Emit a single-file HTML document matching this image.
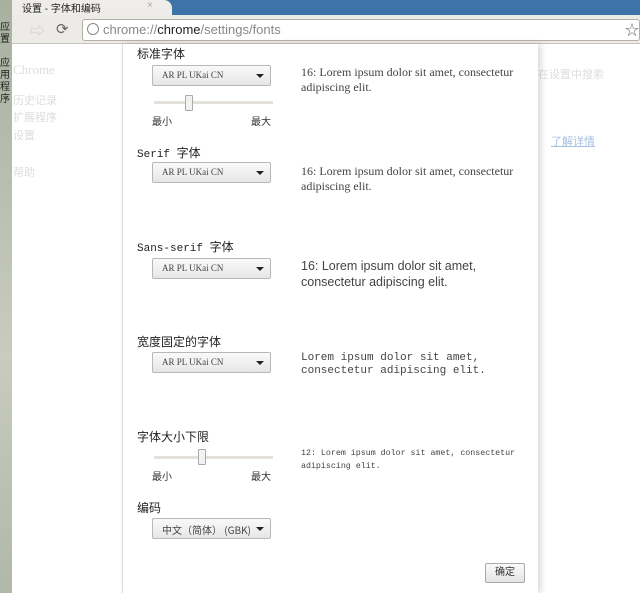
<!DOCTYPE html>
<html><head><meta charset="utf-8"><style>
*{margin:0;padding:0;box-sizing:border-box}
body{width:640px;height:593px;overflow:hidden;position:relative;background:#fff;font-family:"Liberation Sans","Noto Sans CJK SC",sans-serif;color:#222}
.a{position:absolute;white-space:nowrap}
.sel{position:absolute;left:152px;width:119px;height:21px;border:1px solid #b8b8b8;border-radius:2px;background:linear-gradient(#fafafa,#e6e6e6);font-family:"Liberation Serif","Noto Serif CJK SC",serif;font-size:9px;color:#444;padding:4px 0 0 9px}
.sel:after{content:"";position:absolute;right:6px;top:8px;border:4px solid transparent;border-top:4px solid #222;border-bottom:0}
.lbl{position:absolute;left:137px;font-size:12px;color:#222}
.track{position:absolute;left:154px;width:119px;height:3px;background:#e4e0da}
.thumb{position:absolute;width:8px;height:16px;border:1px solid #aaa;background:#f2f2f2;border-radius:1px}
.mm{position:absolute;font-size:10px;color:#333}
.pv{position:absolute;left:301px;font-family:"Liberation Serif",serif;font-size:12px;color:#444;line-height:15px}
.faint{color:#ddd;font-size:11px}
</style></head><body>
<!-- tab bar -->
<div class="a" style="left:0;top:0;width:640px;height:15px;background:#e8e6e2"></div>
<div class="a" style="left:160px;top:0;width:480px;height:15px;background:#3e73a8"></div>
<div class="a" style="left:12px;top:0;width:160px;height:15px;background:#efede9;border-radius:0 8px 0 0"></div>
<div class="a" style="left:22px;top:0;font-size:10px;color:#222">设置 - 字体和编码</div>
<div class="a" style="left:147px;top:0;font-size:10px;color:#aaa">×</div>
<!-- toolbar -->
<div class="a" style="left:0;top:15px;width:640px;height:29px;background:#ecebe8;border-bottom:1px solid #c8c4bc"></div>
<div class="a" style="left:30px;top:20px;font-size:15px;color:#ccc">⇨</div>
<div class="a" style="left:56px;top:20px;font-size:15px;color:#666">⟳</div>
<div class="a" style="left:82px;top:19px;width:558px;height:22px;background:#fff;border:1px solid #b5b0a6;border-radius:3px"></div>
<div class="a" style="left:87px;top:23px;width:12px;height:12px;border:1px solid #888;border-radius:50%"></div>
<div class="a" style="left:103px;top:22px;font-size:13px;color:#888">chrome://<span style="color:#222">chrome</span>/settings/fonts</div>
<div class="a" style="left:625px;top:20px;font-size:14px;color:#666">☆</div>
<!-- left desktop strip -->
<div class="a" style="left:0;top:0;width:12px;height:593px;background:linear-gradient(#a8b0a0,#c8ccbc 60%,#b0b8a8);overflow:hidden"></div>
<div style="position:absolute;left:0;top:22px;font-size:10px;line-height:12px;width:11px;overflow:hidden;color:#222;word-break:break-all">应置<br><br>应用程序</div>
<!-- faint bg -->
<div class="a faint" style="left:13px;top:62px;font-size:13px;font-family:'Liberation Serif',serif">Chrome</div>
<div class="a faint" style="left:13px;top:92px">历史记录</div>
<div class="a faint" style="left:13px;top:109px">扩展程序</div>
<div class="a faint" style="left:13px;top:127px">设置</div>
<div class="a faint" style="left:13px;top:164px">帮助</div>
<div class="a faint" style="left:538px;top:66px">在设置中搜索</div>
<div class="a" style="left:551px;top:133px;font-size:11px;color:#a8c0e0;text-decoration:underline">了解详情</div>
<!-- dialog -->
<div class="a" style="left:122px;top:44px;width:416px;height:549px;background:#fff;border-left:1px solid #ddd;box-shadow:3px 0 6px rgba(0,0,0,.15)"></div>
<div class="lbl" style="top:45px">标准字体</div>
<div class="sel" style="top:65px">AR PL UKai CN</div>
<div class="track" style="top:101px"></div><div class="thumb" style="left:185px;top:95px"></div>
<div class="mm" style="left:152px;top:113px">最小</div><div class="mm" style="left:251px;top:113px">最大</div>
<div class="pv" style="top:65px">16: Lorem ipsum dolor sit amet, consectetur<br>adipiscing elit.</div>

<div class="lbl" style="top:144px;font-family:'Liberation Mono','Noto Sans CJK SC',monospace;font-size:11px">Serif <span style="font-size:12px;font-family:'Noto Sans CJK SC'">字体</span></div>
<div class="sel" style="top:162px">AR PL UKai CN</div>
<div class="pv" style="top:164px">16: Lorem ipsum dolor sit amet, consectetur<br>adipiscing elit.</div>

<div class="lbl" style="top:238px;font-family:'Liberation Mono','Noto Sans CJK SC',monospace;font-size:11px">Sans-serif <span style="font-size:12px;font-family:'Noto Sans CJK SC'">字体</span></div>
<div class="sel" style="top:258px">AR PL UKai CN</div>
<div class="pv" style="top:258px;font-family:'Liberation Sans',sans-serif;font-size:12.5px;line-height:16px">16: Lorem ipsum dolor sit amet,<br>consectetur adipiscing elit.</div>

<div class="lbl" style="top:333px">宽度固定的字体</div>
<div class="sel" style="top:352px">AR PL UKai CN</div>
<div class="pv" style="top:352px;font-family:'Liberation Mono',monospace;font-size:11px;line-height:13px">Lorem ipsum dolor sit amet,<br>consectetur adipiscing elit.</div>

<div class="lbl" style="top:428px">字体大小下限</div>
<div class="track" style="top:456px"></div><div class="thumb" style="left:198px;top:449px"></div>
<div class="mm" style="left:152px;top:468px">最小</div><div class="mm" style="left:251px;top:468px">最大</div>
<div class="pv" style="top:447px;font-family:'Liberation Mono',monospace;font-size:8.3px;line-height:13px">12: Lorem ipsum dolor sit amet, consectetur<br>adipiscing elit.</div>

<div class="lbl" style="top:499px">编码</div>
<div class="sel" style="top:518px;font-family:'Noto Sans CJK SC',serif;font-size:10px;padding-top:3px">中文（简体） (GBK)</div>

<div class="a" style="left:485px;top:563px;width:40px;height:20px;border:1px solid #aaa;border-radius:2px;background:linear-gradient(#fafafa,#e4e4e4);font-size:10px;text-align:center;line-height:18px;color:#333">确定</div>
</body></html>
